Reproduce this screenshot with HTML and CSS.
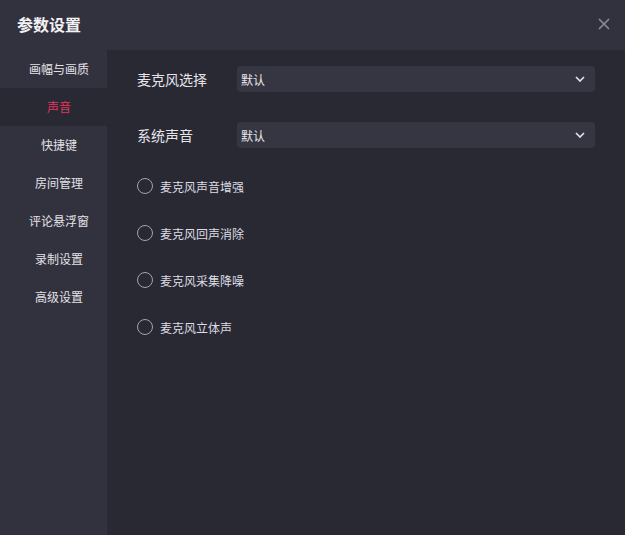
FILE: index.html
```html
<!DOCTYPE html>
<html lang="zh-CN">
  <head>
    <meta charset="UTF-8" />
    <meta name="viewport" content="width=device-width, initial-scale=1.0" />
    <title>参数设置</title>
    <link rel="stylesheet" href="styles.css">
  </head>
  <body>
    <div class="dialog">
      <div class="header">
        <h1>参数设置</h1>
        <button class="close" aria-label="关闭">
          <svg width="12" height="12" viewBox="0 0 12 12">
            <path d="M1 1 L11 11 M11 1 L1 11" stroke="#8b8b95" stroke-width="1.6" fill="none" />
          </svg>
        </button>
      </div>
      <div class="main">
        <div class="sidebar">
          <div class="nav-item">画幅与画质</div>
          <div class="nav-item active">声音</div>
          <div class="nav-item">快捷键</div>
          <div class="nav-item">房间管理</div>
          <div class="nav-item">评论悬浮窗</div>
          <div class="nav-item">录制设置</div>
          <div class="nav-item">高级设置</div>
        </div>
        <div class="content">
          <div class="form-row">
            <label>麦克风选择</label>
            <div class="select">
              <span>默认</span>
              <svg width="10" height="6" viewBox="0 0 10 6">
                <path d="M1 1 L5 5 L9 1" stroke="#e6e6ea" stroke-width="1.6" fill="none" />
              </svg>
            </div>
          </div>
          <div class="form-row">
            <label>系统声音</label>
            <div class="select">
              <span>默认</span>
              <svg width="10" height="6" viewBox="0 0 10 6">
                <path d="M1 1 L5 5 L9 1" stroke="#e6e6ea" stroke-width="1.6" fill="none" />
              </svg>
            </div>
          </div>
          <div class="options">
            <div class="radio-row"><span class="radio"></span>麦克风声音增强</div>
            <div class="radio-row"><span class="radio"></span>麦克风回声消除</div>
            <div class="radio-row"><span class="radio"></span>麦克风采集降噪</div>
            <div class="radio-row"><span class="radio"></span>麦克风立体声</div>
          </div>
        </div>
      </div>
    </div>
  </body>
</html>
```

FILE: styles.css
```css
body {
  margin: 0;
  padding: 0;
  background: #ffffff;
  font-family: "Noto Sans CJK SC", "Noto Sans", sans-serif;
}

.dialog {
  width: 625px;
  height: 535px;
  display: flex;
  flex-direction: column;
  background: #292934;
  color: #e6e6ea;
}

.header {
  height: 50px;
  flex-shrink: 0;
  box-sizing: border-box;
  background: #32313e;
  display: flex;
  align-items: center;
  justify-content: space-between;
  padding: 0 15px 3px 17px;
}

.header h1 {
  margin: 0;
  font-size: 16px;
  font-weight: bold;
  color: #f2f2f4;
}

.close {
  background: none;
  border: none;
  padding: 0;
  width: 12px;
  height: 12px;
  display: flex;
  cursor: pointer;
}

.main {
  flex: 1;
  display: flex;
}

.sidebar {
  width: 107px;
  background: #32313e;
}

.nav-item {
  height: 38px;
  line-height: 38px;
  padding-left: 11px;
  text-align: center;
  font-size: 12px;
  color: #e2e2e6;
}

.nav-item.active {
  background: #292934;
  color: #e8355d;
}

.content {
  flex: 1;
  padding: 16px 30px 0 30px;
}

.form-row {
  display: flex;
  align-items: center;
  height: 26px;
  margin-bottom: 30px;
}

.form-row label {
  width: 100px;
  font-size: 14px;
  color: #e6e6ea;
}

.select {
  flex: 1;
  height: 26px;
  background: #363542;
  border-radius: 4px;
  display: flex;
  align-items: center;
  justify-content: space-between;
  padding: 0 10px 0 4px;
  box-sizing: border-box;
  font-size: 12px;
  color: #e6e6ea;
}

.options {
  margin-top: -2px;
  display: flex;
  flex-direction: column;
  gap: 27px;
}

.radio-row {
  height: 20px;
  display: flex;
  align-items: center;
  font-size: 12px;
  color: #dcdce2;
}

.radio {
  width: 16px;
  height: 16px;
  border: 1.5px solid #a3a3ab;
  border-radius: 50%;
  box-sizing: border-box;
  margin-right: 7px;
}
```
